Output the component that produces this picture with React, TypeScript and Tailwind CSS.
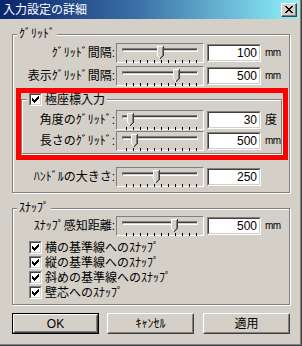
import React from "react";

const CHECK = ["......#", ".....##", "#...###", "##.###.", "#####..", ".###...", "..#...."];
const CROSS = ["##....##", ".##..##.", "..####..", "...##...", "..####..", ".##..##.", "##....##"];

function Pixels({ rows, color }: { rows: string[]; color: string }) {
  return (
    <svg width={rows[0].length} height={rows.length} shapeRendering="crispEdges" className="block">
      {rows.flatMap((r, y) =>
        r.split("").map((c, x) =>
          c === "#" ? <rect key={`${x}-${y}`} x={x} y={y} width={1} height={1} fill={color} /> : null
        )
      )}
    </svg>
  );
}

function Sunken({ className, children }: { className: string; children?: React.ReactNode }) {
  return (
    <div className={`border border-t-[#808080] border-l-[#808080] border-b-white border-r-white ${className}`}>
      <div className="h-full border border-t-[#404040] border-l-[#404040] border-b-[#d4d0c8] border-r-[#d4d0c8] bg-white">
        {children}
      </div>
    </div>
  );
}

function Checkbox() {
  return (
    <Sunken className="w-[13px] h-[13px] flex-none">
      <div className="h-full flex items-center justify-center">
        <Pixels rows={CHECK} color="#000" />
      </div>
    </Sunken>
  );
}

function Thumb() {
  return (
    <svg width="7" height="13" viewBox="0 0 7 13" shapeRendering="crispEdges" className="block">
      <polygon points="0,0 7,0 7,10 3.5,13 0,10" fill="#d4d0c8" />
      <rect x="0" y="0" width="6" height="1" fill="#fff" />
      <rect x="0" y="0" width="1" height="10" fill="#fff" />
      <rect x="1" y="10" width="1" height="1" fill="#fff" />
      <rect x="2" y="11" width="1" height="1" fill="#fff" />
      <rect x="6" y="0" width="1" height="10" fill="#404040" />
      <rect x="5" y="1" width="1" height="9" fill="#808080" />
      <rect x="5" y="10" width="1" height="1" fill="#404040" />
      <rect x="4" y="11" width="1" height="1" fill="#404040" />
      <rect x="3" y="12" width="1" height="1" fill="#404040" />
      <rect x="4" y="10" width="1" height="1" fill="#808080" />
      <rect x="3" y="11" width="1" height="1" fill="#808080" />
    </svg>
  );
}

// pos = thumb centre, counted from the slider frame's left edge
function Slider({ pos }: { pos: number }) {
  return (
    <div className="relative w-[88px] h-[20px] flex-none border border-t-[#808080] border-l-[#808080] border-b-white border-r-white">
      <div className="mt-[4px] ml-[5px] w-[76px] h-[4px] border border-t-[#808080] border-l-[#808080] border-b-white border-r-white bg-[linear-gradient(#404040_50%,#d4d0c8_50%)]" />
      <div className="mt-[8px] ml-[9px] w-[71px] h-[3px] flex justify-between">
        {Array.from({ length: 11 }).map((_, i) => (
          <div key={i} className="w-px h-full bg-black" />
        ))}
      </div>
      <div className="absolute top-[2px]" style={{ left: pos - 4 }}>
        <Thumb />
      </div>
    </div>
  );
}

function Row({
  label,
  labelCls,
  pos,
  value,
  unit,
}: {
  label: string;
  labelCls: string;
  pos: number;
  value: string;
  unit?: string;
}) {
  return (
    <div className="flex items-center h-[20px]">
      <div className={`${labelCls} flex-none text-right pr-[1px] text-[12px] leading-[14px] whitespace-nowrap`}>{label}</div>
      <Slider pos={pos} />
      <Sunken className="ml-[3px] w-[54px] h-[18px] flex-none">
        <div className="text-right pr-[2px] text-[12px] leading-[14px]">{value}</div>
      </Sunken>
      {unit && (
        <div className={`ml-[4px] ${unit === "度" ? "text-[12px]" : "text-[10px] tracking-[-0.5px]"} leading-[14px]`}>{unit}</div>
      )}
    </div>
  );
}

function Group({ cls, legend, children }: { cls: string; legend: React.ReactNode; children: React.ReactNode }) {
  return (
    <div className={`relative flex-none border border-[#808080] shadow-[inset_1px_1px_0_#fff,1px_1px_0_#fff] ${cls}`}>
      {legend}
      {children}
    </div>
  );
}

function CheckRow({ label }: { label: string }) {
  return (
    <div className="flex items-center h-[15px] ml-[16px]">
      <Checkbox />
      <span className="ml-[3px] text-[12px] leading-[14px] whitespace-nowrap">{label}</span>
    </div>
  );
}

function Button({ label, isDefault }: { label: string; isDefault?: boolean }) {
  const raised = (
    <div className="h-full border border-t-white border-l-white border-b-[#404040] border-r-[#404040]">
      <div className="h-full border border-t-[#d4d0c8] border-l-[#d4d0c8] border-b-[#808080] border-r-[#808080] flex items-center justify-center text-[12px] leading-[14px]">
        {label}
      </div>
    </div>
  );
  return isDefault ? (
    <div className="w-[87px] h-[21px] flex-none border border-black">{raised}</div>
  ) : (
    <div className="w-[87px] h-[21px] flex-none">{raised}</div>
  );
}

export default function App() {
  return (
    <div className="w-[302px] h-[346px] bg-[#d4d0c8] text-black font-['Liberation_Sans','Noto_Sans_CJK_JP',sans-serif] border-r border-b border-[#404040] overflow-hidden">
      <div className="h-full flex flex-col border-r border-b border-[#808080]">
        {/* title bar */}
        <div className="h-[19px] w-[299px] flex-none flex items-center bg-[linear-gradient(to_right,#0a246a,#3a6ea5_45%,#8ef2fa)]">
          <span className="ml-[3px] text-white text-[12px] leading-[14px]">入力設定の詳細</span>
          <div className="ml-auto mr-[2px] w-[16px] h-[14px] border border-t-white border-l-white border-b-[#404040] border-r-[#404040] bg-[#d4d0c8]">
            <div className="h-full border-r border-b border-[#808080] flex items-center justify-center">
              <Pixels rows={CROSS} color="#000" />
            </div>
          </div>
        </div>

        {/* grid group */}
        <Group
          cls="mt-[15px] ml-[12px] w-[278px] h-[159px]"
          legend={
            <div className="absolute left-[4px] top-[-8px] px-[2px] bg-[#d4d0c8] text-[12px] leading-[15px]">ｸﾞﾘｯﾄﾞ</div>
          }
        >
          <div className="flex flex-col">
            <div className="mt-[8px]">
              <Row label="ｸﾞﾘｯﾄﾞ間隔:" labelCls="w-[103px]" pos={44} value="100" unit="mm" />
            </div>
            <div className="mt-[3px]">
              <Row label="表示ｸﾞﾘｯﾄﾞ間隔:" labelCls="w-[103px]" pos={60} value="500" unit="mm" />
            </div>

            {/* polar input, marked in red */}
            <div className="mt-[2px] ml-[3px] w-[272px] h-[72px] border-[5px] border-[#ff0000]">
              <Group
                cls="mt-[6px] w-[261px] h-[55px]"
                legend={
                  <div className="absolute left-[5px] top-[-7px] h-[13px] px-[2px] flex items-center bg-[#d4d0c8]">
                    <Checkbox />
                    <span className="ml-[3px] text-[12px] leading-[14px]">極座標入力</span>
                  </div>
                }
              >
                <div className="mt-[10px]">
                  <Row label="角度のｸﾞﾘｯﾄﾞ:" labelCls="w-[94px]" pos={14} value="30" unit="度" />
                </div>
                <div className="mt-[1px]">
                  <Row label="長さのｸﾞﾘｯﾄﾞ:" labelCls="w-[94px]" pos={18} value="500" unit="mm" />
                </div>
              </Group>
            </div>

            <div className="mt-[7px]">
              <Row label="ﾊﾝﾄﾞﾙの大きさ:" labelCls="w-[103px]" pos={40} value="250" />
            </div>
          </div>
        </Group>

        {/* snap group */}
        <Group
          cls="mt-[15px] ml-[12px] w-[278px] h-[97px]"
          legend={
            <div className="absolute left-[4px] top-[-8px] px-[2px] bg-[#d4d0c8] text-[12px] leading-[15px]">ｽﾅｯﾌﾟ</div>
          }
        >
          <div className="mt-[7px]">
            <Row label="ｽﾅｯﾌﾟ感知距離:" labelCls="w-[103px]" pos={58} value="500" unit="mm" />
          </div>
          <div className="mt-[4px] flex flex-col">
            <CheckRow label="横の基準線へのｽﾅｯﾌﾟ" />
            <CheckRow label="縦の基準線へのｽﾅｯﾌﾟ" />
            <CheckRow label="斜めの基準線へのｽﾅｯﾌﾟ" />
            <CheckRow label="壁芯へのｽﾅｯﾌﾟ" />
          </div>
        </Group>

        {/* buttons */}
        <div className="mt-[8px] ml-[12px] flex">
          <Button label="OK" isDefault />
          <div className="ml-[8px]">
            <Button label="ｷｬﾝｾﾙ" />
          </div>
          <div className="ml-[9px]">
            <Button label="適用" />
          </div>
        </div>
      </div>
    </div>
  );
}
